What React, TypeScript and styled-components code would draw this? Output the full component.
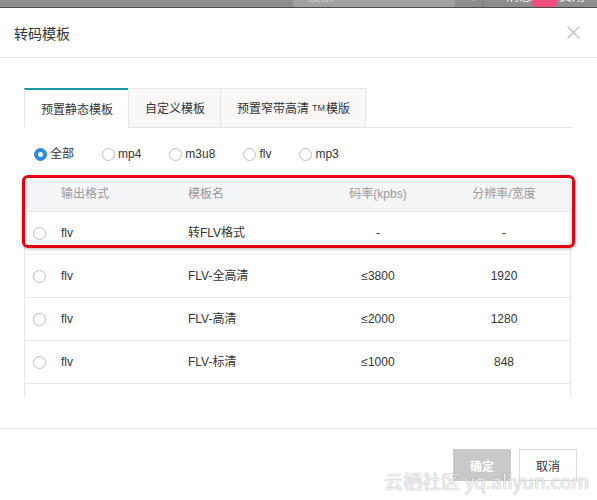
import React from "react";
import styled, { createGlobalStyle, css } from "styled-components";

const GlobalStyle = createGlobalStyle`
  html, body {
    margin: 0;
    padding: 0;
    background: #ffffff;
  }
  body {
    font-family: "Liberation Sans", "Noto Sans CJK SC", sans-serif;
    color: #333333;
    -webkit-font-smoothing: antialiased;
  }
  * { box-sizing: border-box; }
`;

const Page = styled.div`
  position: relative;
  width: 597px;
  height: 500px;
  overflow: hidden;
  background: #ffffff;
`;

/* ---------- page header peeking above the modal ---------- */
const TopBar = styled.div`
  height: 8px;
  background: #8e8e8e;
  border-bottom: 1px solid #4a4a4a;
  overflow: hidden;
`;

const TopBarInner = styled.div`
  display: flex;
  align-items: center;
  height: 24px;
  margin-top: -17px;
  padding-left: 293px;
  font-family: "Noto Sans CJK SC", sans-serif;
  font-size: 13px;
`;

const SearchBox = styled.div`
  width: 162px;
  height: 24px;
  background: #a2a2a2;
  color: #d0d0d0;
  padding-left: 15px;
  line-height: 24px;
`;

const SearchButton = styled.div`
  width: 28px;
  height: 24px;
  display: flex;
  align-items: center;
  justify-content: center;
  border-right: 1px solid #7b7b7b;
`;

const TopLink = styled.span<{ $ml: number }>`
  color: #eeeeee;
  line-height: 24px;
  margin-left: ${(p) => p.$ml}px;
`;

const Badge = styled.span`
  display: inline-block;
  width: 25px;
  height: 24px;
  background: #ee4f7c;
  border-radius: 4px;
`;

/* ---------- dialog ---------- */
const DialogHeader = styled.div`
  height: 50px;
  display: flex;
  align-items: center;
  justify-content: space-between;
  padding: 0 17px 0 14px;
  border-bottom: 1px solid #e5e5e5;
`;

const Title = styled.h1`
  margin: 0;
  font-size: 14px;
  font-weight: normal;
  color: #333333;
  font-family: "Noto Sans CJK SC", sans-serif;
`;

const CloseButton = styled.button`
  border: none;
  background: transparent;
  padding: 0;
  width: 13px;
  height: 13px;
  display: flex;
  cursor: pointer;
`;

const DialogBody = styled.div`
  padding: 30px 25px 31px 24px;
`;

const Tabs = styled.div`
  display: flex;
  border-bottom: 1px solid #e3e3e3;
  height: 40px;
`;

const Tab = styled.div<{ $active?: boolean }>`
  height: 40px;
  padding: 0 15px 0 16px;
  display: flex;
  align-items: center;
  font-size: 12px;
  line-height: 16px;
  color: #333333;
  font-family: "Noto Sans CJK SC", sans-serif;
  background: #f9f8f7;
  border: 1px solid #e6e6e6;
  margin-left: -1px;
  margin-bottom: -1px;
  border-bottom-color: #e3e3e3;
  ${(p) =>
    p.$active &&
    css`
      margin-left: 0;
      background: #ffffff;
      border-top: 2px solid #1c9ab2;
      border-bottom-color: #ffffff;
      padding-top: 1px;
    `}
`;

const Tm = styled.span`
  font-size: 9px;
  font-family: "Liberation Sans", sans-serif;
  margin: 0 1px 0 3px;
`;

const FilterRow = styled.div`
  display: flex;
  align-items: center;
  gap: 28px;
  height: 16px;
  margin: 18px 0 15px 10px;
`;

const FilterItem = styled.label`
  display: flex;
  align-items: center;
  gap: 3px;
  font-size: 12px;
  line-height: 16px;
  color: #333333;
  font-family: "Liberation Sans", "Noto Sans CJK SC", sans-serif;
`;

const RadioCircle = styled.span<{ $checked?: boolean }>`
  width: 13px;
  height: 13px;
  border-radius: 50%;
  flex: none;
  display: flex;
  align-items: center;
  justify-content: center;
  border: 1px solid ${(p) => (p.$checked ? "#2b8ae6" : "#bdbdbd")};
  background: ${(p) => (p.$checked ? "#2b8ae6" : "#ffffff")};
  &::after {
    content: "";
    display: ${(p) => (p.$checked ? "block" : "none")};
    width: 5px;
    height: 5px;
    border-radius: 50%;
    background: #ffffff;
  }
`;

const TableWrap = styled.div`
  position: relative;
  width: 547px;
`;

const TableScroll = styled.div`
  height: 220px;
  overflow: hidden;
  border-left: 1px solid #e6e6e6;
  border-right: 1px solid #e6e6e6;
`;

const gridCols = css`
  display: grid;
  grid-template-columns: 36px 127px 130px 120px 1fr;
  align-items: center;
  font-size: 12px;
`;

const HeaderRow = styled.div`
  ${gridCols};
  height: 35px;
  background: #f4f5f7;
  color: #999999;
  border-bottom: 1px solid #e8e8e8;
`;

const Row = styled.div`
  ${gridCols};
  height: 43px;
  color: #333333;
  border-bottom: 1px solid #e8e8e8;
  background: #ffffff;
`;

const Cell = styled.div<{ $center?: boolean }>`
  display: flex;
  align-items: center;
  justify-content: ${(p) => (p.$center ? "center" : "flex-start")};
  height: 16px;
  line-height: 16px;
  font-family: "Liberation Sans", "Noto Sans CJK SC", sans-serif;
  white-space: nowrap;
`;

const RowRadio = styled(RadioCircle)`
  margin-left: 8px;
`;

const Highlight = styled.div`
  position: absolute;
  left: -2px;
  top: -2px;
  width: 553px;
  height: 73px;
  border: 3px solid #e5000f;
  border-radius: 6px;
  box-shadow: 0 1px 3px rgba(0, 0, 0, 0.3);
  pointer-events: none;
`;

const Footer = styled.div`
  display: flex;
  justify-content: flex-end;
  gap: 8px;
  padding: 20px 20px 0 0;
  border-top: 1px solid #e5e5e5;
`;

const buttonBase = css`
  width: 58px;
  height: 32px;
  font-size: 12px;
  font-family: "Noto Sans CJK SC", sans-serif;
  border-radius: 0;
  padding: 0;
`;

const ConfirmButton = styled.button`
  ${buttonBase};
  border: 1px solid #c9c9c9;
  background: #c9c9c9;
  color: #ffffff;
  font-weight: bold;
`;

const CancelButton = styled.button`
  ${buttonBase};
  border: 1px solid #dcdcdc;
  background: #ffffff;
  color: #333333;
`;

const Watermark = styled.div`
  position: absolute;
  right: 8px;
  bottom: 8px;
  font-size: 19px;
  line-height: 22px;
  font-family: "Noto Sans CJK SC", sans-serif;
  color: rgba(255, 255, 255, 0.85);
  text-shadow: 0 0 1px rgba(0, 0, 0, 0.35), 0 0 2px rgba(0, 0, 0, 0.12);
  pointer-events: none;
  white-space: nowrap;
`;

const filters = [
  { label: "全部", checked: true },
  { label: "mp4" },
  { label: "m3u8" },
  { label: "flv" },
  { label: "mp3" },
];

const rows = [
  { fmt: "flv", name: "转FLV格式", rate: "-", res: "-" },
  { fmt: "flv", name: "FLV-全高清", rate: "≤3800", res: "1920" },
  { fmt: "flv", name: "FLV-高清", rate: "≤2000", res: "1280" },
  { fmt: "flv", name: "FLV-标清", rate: "≤1000", res: "848" },
  { fmt: "flv", name: "FLV-流畅", rate: "≤600", res: "640" },
];

export default function App() {
  return (
    <Page>
      <GlobalStyle />
      <TopBar>
        <TopBarInner>
          <SearchBox>搜索</SearchBox>
          <SearchButton>
            <svg width="14" height="14" viewBox="0 0 14 14" fill="none" stroke="#e6e6e6" strokeWidth="1.6">
              <circle cx="6" cy="6" r="4.5" />
              <line x1="9.3" y1="9.3" x2="12.5" y2="12.5" />
            </svg>
          </SearchButton>
          <TopLink $ml={23}>消息</TopLink>
          <Badge />
          <TopLink $ml={2}>费用</TopLink>
        </TopBarInner>
      </TopBar>

      <DialogHeader>
        <Title>转码模板</Title>
        <CloseButton aria-label="关闭">
          <svg width="13" height="13" viewBox="0 0 13 13" stroke="#c4c4c4" strokeWidth="1.5" strokeLinecap="round">
            <line x1="1" y1="1" x2="12" y2="12" />
            <line x1="12" y1="1" x2="1" y2="12" />
          </svg>
        </CloseButton>
      </DialogHeader>

      <DialogBody>
        <Tabs>
          <Tab $active>预置静态模板</Tab>
          <Tab>自定义模板</Tab>
          <Tab>
            预置窄带高清<Tm>TM</Tm>模版
          </Tab>
        </Tabs>

        <FilterRow>
          {filters.map((f) => (
            <FilterItem key={f.label}>
              <RadioCircle $checked={f.checked} />
              {f.label}
            </FilterItem>
          ))}
        </FilterRow>

        <TableWrap>
          <TableScroll>
            <HeaderRow>
              <Cell />
              <Cell>输出格式</Cell>
              <Cell>模板名</Cell>
              <Cell $center>码率(kpbs)</Cell>
              <Cell $center>分辨率/宽度</Cell>
            </HeaderRow>
            {rows.map((r, i) => (
              <Row key={i}>
                <Cell>
                  <RowRadio />
                </Cell>
                <Cell>{r.fmt}</Cell>
                <Cell>{r.name}</Cell>
                <Cell $center>{r.rate}</Cell>
                <Cell $center>{r.res}</Cell>
              </Row>
            ))}
          </TableScroll>
          <Highlight />
        </TableWrap>
      </DialogBody>

      <Footer>
        <ConfirmButton disabled>确定</ConfirmButton>
        <CancelButton>取消</CancelButton>
      </Footer>

      <Watermark>云栖社区 yq.aliyun.com</Watermark>
    </Page>
  );
}
